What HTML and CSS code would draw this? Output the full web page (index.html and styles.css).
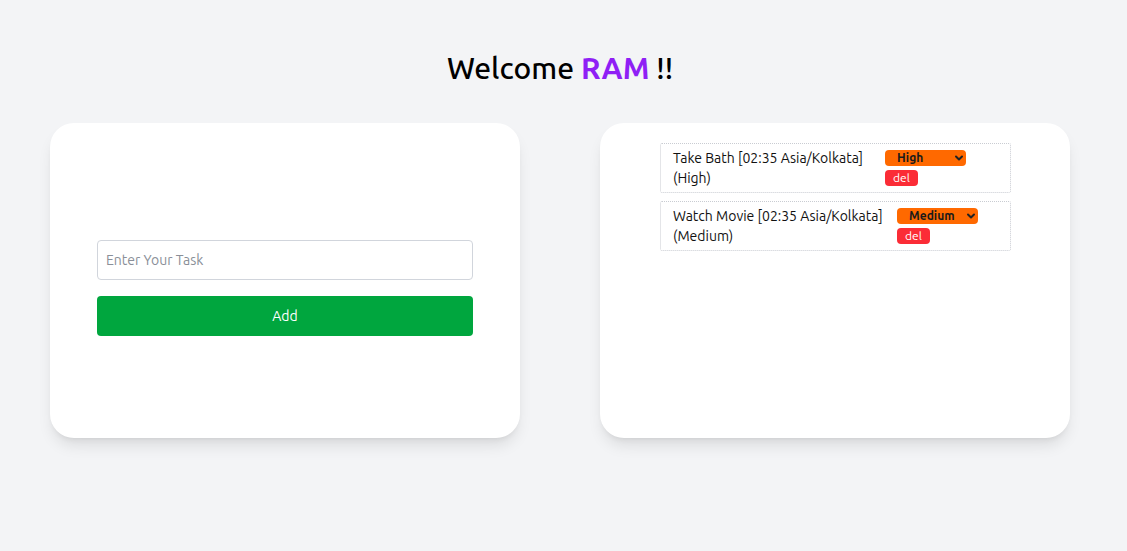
FILE: index.html
```html
<!DOCTYPE html>
<html lang="en">
<head>
<meta charset="utf-8">
<title>Todo</title>
<link rel="stylesheet" href="styles.css">
</head>
<body>
<main class="page">
  <h1 class="title">Welcome <span class="name">RAM</span> !!</h1>
  <div class="cards">
    <section class="card card-form">
      <div class="form">
        <input class="task-input" type="text" placeholder="Enter Your Task">
        <button class="add-btn" type="button">Add</button>
      </div>
    </section>
    <section class="card card-list">
      <ul class="list">
        <li class="item">
          <div class="item-text">Take Bath [02:35 Asia/Kolkata] (High)</div>
          <div class="item-actions">
            <select class="prio">
              <option selected>High</option>
              <option>Medium</option>
              <option>Low</option>
            </select>
            <button class="del" type="button">del</button>
          </div>
        </li>
        <li class="item">
          <div class="item-text">Watch Movie [02:35 Asia/Kolkata] (Medium)</div>
          <div class="item-actions">
            <select class="prio">
              <option>High</option>
              <option selected>Medium</option>
              <option>Low</option>
            </select>
            <button class="del" type="button">del</button>
          </div>
        </li>
      </ul>
    </section>
  </div>
</main>
</body>
</html>
```
FILE: styles.css
```css
* { box-sizing: border-box; }
html, body { margin: 0; padding: 0; }
body {
  background: #f3f4f6;
  font-family: "Ubuntu", "Noto Sans", "Open Sans", sans-serif;
  color: #0a0a0a;
  height: 551px;
}
.page {
  padding: 46px 7px 0 0;
}
.title {
  margin: 0;
  text-align: center;
  font-weight: 500;
  font-size: 30px;
  line-height: 44px;
  color: #000;
}
.name {
  color: #8f1ff5;
  font-weight: 700;
}
.cards {
  display: grid;
  grid-template-columns: 470px 470px;
  column-gap: 80px;
  padding-left: 50px;
  margin-top: 33px;
}
.card {
  background: #fff;
  border-radius: 24px;
  height: 315px;
  box-shadow: 0 10px 15px -3px rgba(0,0,0,.1), 0 4px 6px -4px rgba(0,0,0,.1);
}
.card-form {
  padding: 117px 47px 0;
}
.form {
  display: flex;
  flex-direction: column;
  gap: 16px;
}
.task-input {
  height: 40px;
  border: 1px solid #d1d5dc;
  border-radius: 4px;
  padding: 0 8px;
  font-family: inherit;
  font-size: 14px;
  color: #111;
  outline: none;
}
.task-input::placeholder { color: #8a8f98; }
.add-btn {
  height: 40px;
  border: 0;
  border-radius: 4px;
  background: #00a63e;
  color: #fff;
  font-family: inherit;
  font-size: 14px;
  padding: 0 0 1px;
}
.card-list {
  padding: 20px 59px 0 60px;
}
.list {
  list-style: none;
  margin: 0;
  padding: 0;
  display: flex;
  flex-direction: column;
  gap: 8px;
}
.item {
  display: flex;
  align-items: flex-start;
  border: 1px dotted #c9ccd2;
  border-radius: 2px;
  padding: 4px 12px 4px 12px;
  font-size: 14px;
  line-height: 20px;
  color: #111;
  min-height: 50px;
}
.item-text {
  flex: 0 1 auto;
}
.item-actions {
  flex: 0 1 123px;
  display: flex;
  flex-direction: column;
  align-items: flex-start;
  gap: 4px;
  padding-top: 2px;
}
.prio {
  appearance: none;
  -webkit-appearance: none;
  width: 81px;
  height: 16px;
  border: 0;
  border-radius: 4px;
  background: #ff6900 url("data:image/svg+xml,%3Csvg xmlns='http://www.w3.org/2000/svg' width='10' height='10' viewBox='0 0 10 10'%3E%3Cpath d='M2 3.5l3 3 3-3' fill='none' stroke='%23222' stroke-width='2' stroke-linecap='round' stroke-linejoin='round'/%3E%3C/svg%3E") no-repeat right 2px center;
  font-family: inherit;
  font-size: 12px;
  font-weight: 700;
  line-height: 16px;
  padding: 0 0 0 12px;
  color: #1a1a1a;
}
.del {
  height: 16px;
  border: 0;
  border-radius: 4px;
  background: #fb2c36;
  color: #fff;
  font-family: inherit;
  font-size: 12px;
  line-height: 16px;
  padding: 0 8px;
}
```
